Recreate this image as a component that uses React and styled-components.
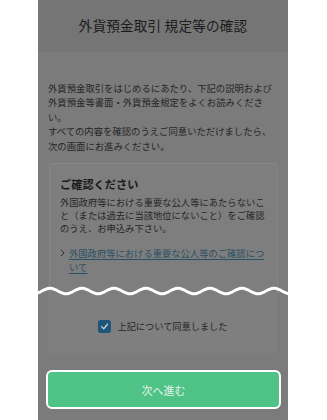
import React from "react";
import styled, { createGlobalStyle } from "styled-components";

const GlobalStyle = createGlobalStyle`
  html, body {
    margin: 0;
    padding: 0;
    background: #ffffff;
  }
  body {
    font-family: "Noto Sans CJK JP", "Noto Sans", sans-serif;
  }
`;

const wavePath = (() => {
  let d = "";
  for (let x = -10; x <= 270; x += 1) {
    const y = 6 + 2.7 * Math.cos(((x - 12) / 32) * Math.PI * 2) * -1;
    d += `${x === -10 ? "M" : "L"}${x} ${y.toFixed(2)} `;
  }
  return d;
})();

const App = () => {
  return (
    <>
      <GlobalStyle />
      <Screen>
        <TopClip>
          <Header>
            <Title>外貨預金取引 規定等の確認</Title>
          </Header>
          <Content>
            <Intro>
              外貨預金取引をはじめるにあたり、下記の説明および外貨預金等書面・外貨預金規定をよくお読みください。
              <br />
              すべての内容を確認のうえご同意いただけましたら、次の画面にお進みください。
            </Intro>
            <Card>
              <CardTitle>ご確認ください</CardTitle>
              <CardText>
                外国政府等における重要な公人等にあたらないこと（または過去に当該地位にないこと）をご確認のうえ、お申込み下さい。
              </CardText>
              <LinkRow>
                <Chevron viewBox="0 0 6 10">
                  <polyline points="1,1 5,5 1,9" />
                </Chevron>
                <LinkText>外国政府等における重要な公人等のご確認について</LinkText>
              </LinkRow>
            </Card>
          </Content>
        </TopClip>
        <Wave viewBox="-8 0 266 12">
          <path d={wavePath} />
        </Wave>
        <AgreePanel>
          <CheckLabel>
            <CheckBox>
              <svg viewBox="0 0 12 12" width="9" height="9">
                <polyline points="2,6.2 5,9 10,3" />
              </svg>
            </CheckBox>
            上記について同意しました
          </CheckLabel>
        </AgreePanel>
        <NextButton>次へ進む</NextButton>
      </Screen>
    </>
  );
};

export default App;

const Screen = styled.div`
  position: relative;
  width: 250px;
  height: 420px;
  margin-left: 38px;
  background: #7b7b7b;
  overflow: hidden;
`;

const TopClip = styled.div`
  height: 294px;
  overflow: hidden;
`;

const Header = styled.div`
  height: 52px;
  background: #757575;
  display: flex;
  justify-content: center;
  padding-top: 15px;
  box-sizing: border-box;
`;

const Title = styled.div`
  font-size: 13.6px;
  line-height: 20px;
  color: #1c1c1c;
  letter-spacing: 0.2px;
`;

const Content = styled.div`
  padding: 28.5px 10px 0 10px;
`;

const Intro = styled.p`
  margin: 0;
  font-size: 9.35px;
  line-height: 14.5px;
  color: #252525;
`;

const Card = styled.div`
  margin: 10px 0 0 1px;
  padding: 12px 7px 40px 10px;
  background: #7e7e7e;
  border: 1px solid #878787;
  border-radius: 3px;
`;

const CardTitle = styled.div`
  font-size: 11.2px;
  font-weight: 700;
  line-height: 16px;
  color: #1a1a1a;
`;

const CardText = styled.p`
  margin: 4px 0 0 0;
  font-size: 9.3px;
  line-height: 13px;
  color: #262626;
  word-break: break-all;
`;

const LinkRow = styled.div`
  display: flex;
  align-items: flex-start;
  gap: 4px;
  margin-top: 11px;
`;

const Chevron = styled.svg`
  width: 5px;
  height: 8px;
  margin-top: 3px;
  flex: none;
  fill: none;
  stroke: #2a2a2a;
  stroke-width: 1.2;
`;

const LinkText = styled.span`
  flex: 1;
  min-width: 0;
  font-size: 9.3px;
  line-height: 14px;
  color: #2a5064;
  text-decoration: underline;
  text-underline-offset: 1.5px;
  word-break: break-all;
`;

const Wave = styled.svg`
  position: absolute;
  left: -8px;
  top: 285px;
  width: 266px;
  height: 12px;
  fill: none;
  stroke: #ffffff;
  stroke-width: 3;
`;

const AgreePanel = styled.div`
  height: 59px;
  margin: 0 11px 0 10px;
  padding-top: 6px;
  box-sizing: border-box;
  background: #7f7f7f;
  display: flex;
  justify-content: center;
  align-items: center;
`;

const CheckLabel = styled.label`
  display: flex;
  align-items: center;
  gap: 7px;
  font-size: 9.2px;
  line-height: 13px;
  color: #262626;
`;

const CheckBox = styled.span`
  width: 13px;
  height: 13px;
  border-radius: 2.5px;
  background: #1f5578;
  display: flex;
  align-items: center;
  justify-content: center;

  svg {
    fill: none;
    stroke: #c9d4db;
    stroke-width: 1.6;
    stroke-linecap: round;
    stroke-linejoin: round;
  }
`;

const NextButton = styled.button`
  display: flex;
  align-items: center;
  justify-content: center;
  width: 235px;
  height: 39px;
  margin: 17px 0 0 8px;
  padding: 0;
  background: #4fc285;
  border: 2px solid #ffffff;
  border-radius: 6px;
  font-family: "Noto Sans CJK JP", "Noto Sans", sans-serif;
  font-size: 11px;
  color: #e3f4ea;
`;
